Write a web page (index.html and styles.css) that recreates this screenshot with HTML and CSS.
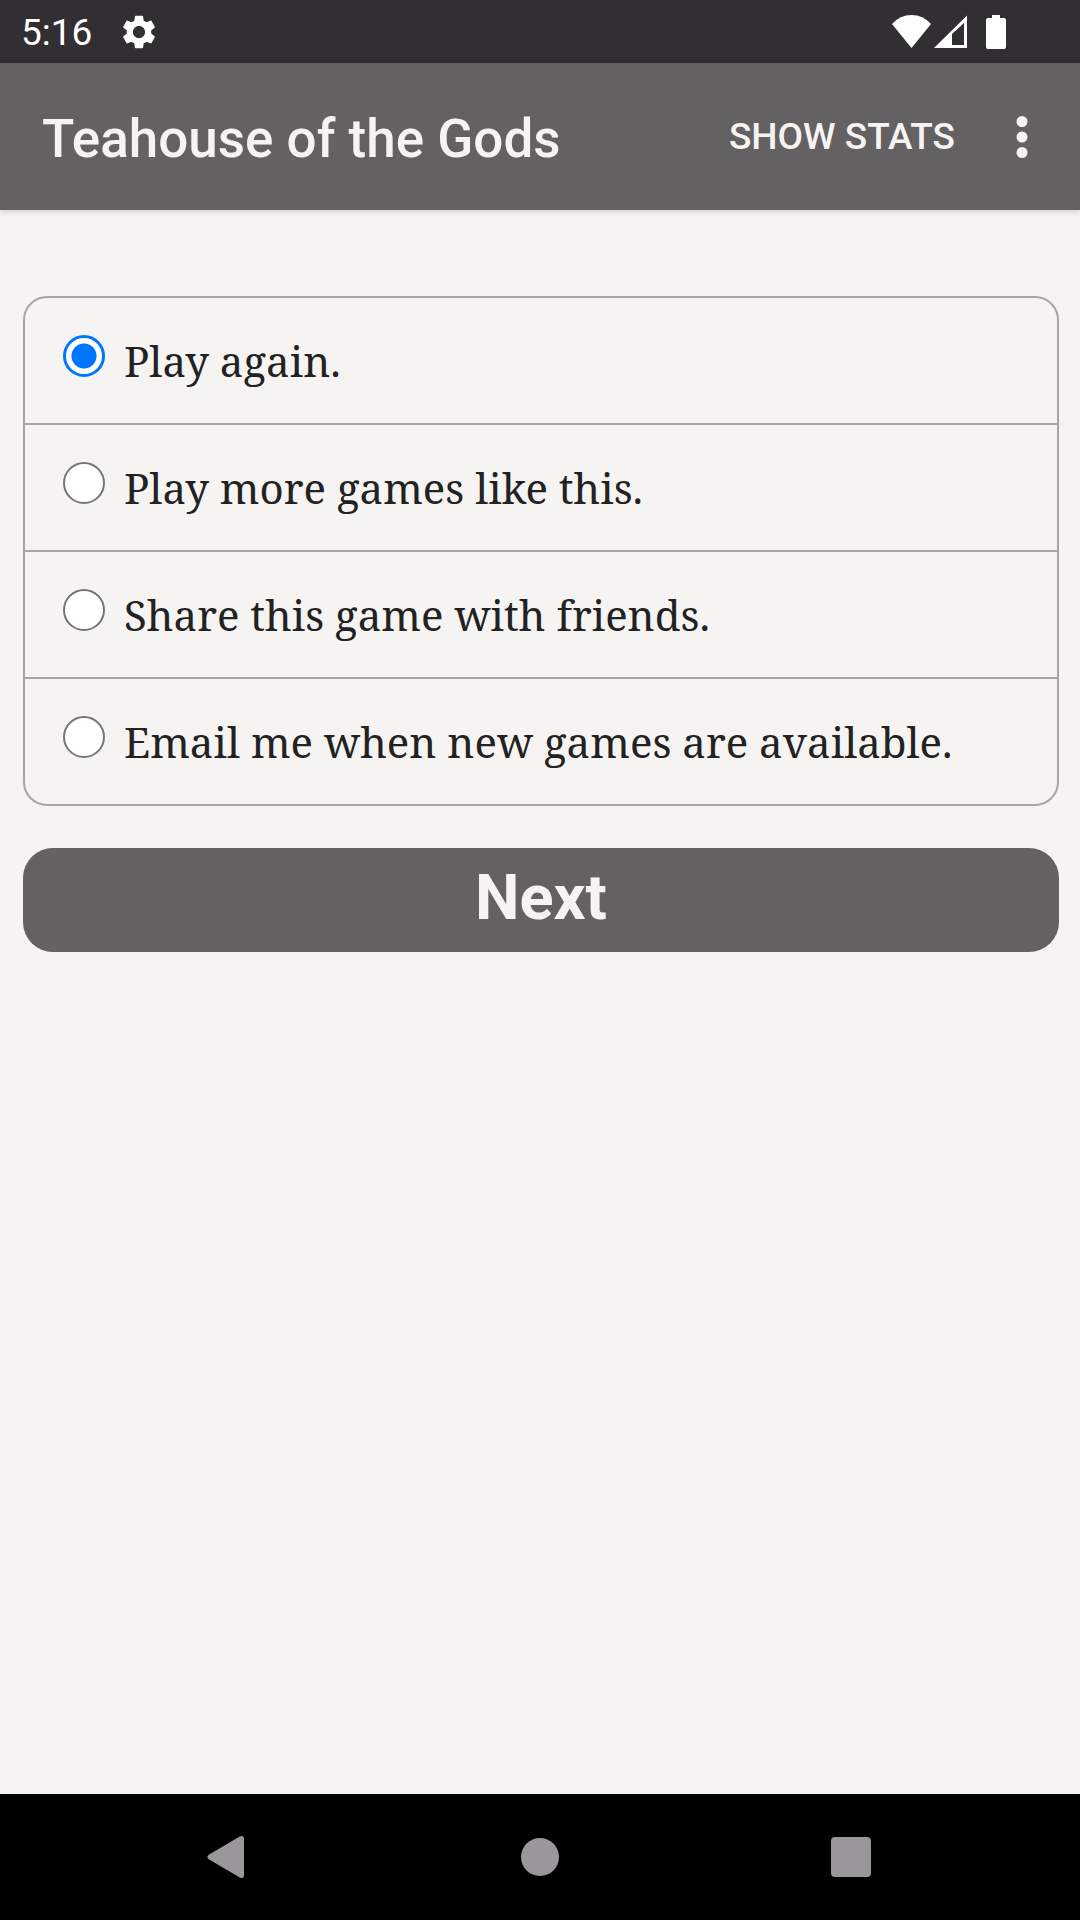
FILE: index.html
```html
<!DOCTYPE html>
<html lang="en">
<head>
<meta charset="utf-8">
<meta name="viewport" content="width=device-width, initial-scale=1">
<title>Teahouse of the Gods</title>
<link rel="stylesheet" href="styles.css">
</head>
<body>
<div class="status-bar">
  <span class="clock">5:16</span>
  <svg class="gear" viewBox="2 2 20 20" aria-hidden="true"><path fill="#fff" d="M19.14 12.94c.04-.3.06-.61.06-.94 0-.32-.02-.64-.07-.94l2.03-1.58c.18-.14.23-.41.12-.61l-1.92-3.32c-.12-.22-.37-.29-.59-.22l-2.39.96c-.5-.38-1.03-.7-1.62-.94l-.36-2.54c-.04-.24-.24-.41-.48-.41h-3.84c-.24 0-.43.17-.47.41l-.36 2.54c-.59.24-1.13.57-1.62.94l-2.39-.96c-.22-.08-.47 0-.59.22L2.74 8.87c-.12.21-.08.47.12.61l2.03 1.58c-.05.3-.09.63-.09.94s.02.64.07.94l-2.03 1.58c-.18.14-.23.41-.12.61l1.92 3.32c.12.22.37.29.59.22l2.39-.96c.5.38 1.03.7 1.62.94l.36 2.54c.05.24.24.41.48.41h3.84c.24 0 .44-.17.47-.41l.36-2.54c.59-.24 1.13-.56 1.62-.94l2.39.96c.22.08.47 0 .59-.22l1.92-3.32c.12-.22.07-.47-.12-.61l-2.01-1.58zM12 15.6c-1.98 0-3.6-1.62-3.6-3.6s1.62-3.6 3.6-3.6 3.6 1.62 3.6 3.6-1.62 3.6-3.6 3.6z"/></svg>
  <svg class="signals" viewBox="0 0 114 34" aria-hidden="true">
    <path fill="#fff" d="M0 9Q8 0 19.500 0T39 9L19.500 33Z"/>
    <path fill="#fff" fill-rule="evenodd" d="M42 33L75 .5V33ZM60 19V30H72V8Z"/>
    <path fill="#fff" d="M100 0h8v3h4q2 0 2 2v27q0 2-2 2H96q-2 0-2-2V5q0-2 2-2h4Z"/>
  </svg>
</div>
<header class="app-bar">
  <h1 class="title">Teahouse of the Gods</h1>
  <button class="stats" type="button">SHOW STATS</button>
  <button class="more" type="button" aria-label="More options">
    <svg class="dots" viewBox="0 0 12 42" aria-hidden="true"><g fill="#f5f4f2"><circle cx="6" cy="5.500" r="5.500"/><circle cx="6" cy="21" r="5.500"/><circle cx="6" cy="36.500" r="5.500"/></g></svg>
  </button>
</header>
<main class="content">
  <form class="form">
    <div class="choices" role="radiogroup" aria-label="What next?">
      <label class="choice"><input class="radio" type="radio" name="next" checked><span>Play again.</span></label>
      <label class="choice"><input class="radio" type="radio" name="next"><span>Play more games like this.</span></label>
      <label class="choice"><input class="radio" type="radio" name="next"><span>Share this game with friends.</span></label>
      <label class="choice"><input class="radio" type="radio" name="next"><span>Email me when new games are available.</span></label>
    </div>
    <button class="next" type="button">Next</button>
  </form>
</main>
<nav class="nav-bar" aria-label="System">
  <button class="nav-button" type="button" aria-label="Back"><svg class="nav-icon" viewBox="0 0 44 44" aria-hidden="true"><path d="M3 22L34.500 3.500V40.500Z" fill="#9a979a" stroke="#9a979a" stroke-width="5" stroke-linejoin="round"/></svg></button>
  <button class="nav-button" type="button" aria-label="Home"><svg class="nav-icon" viewBox="0 0 44 44" aria-hidden="true"><circle cx="22" cy="22" r="19" fill="#9a979a"/></svg></button>
  <button class="nav-button" type="button" aria-label="Recent apps"><svg class="nav-icon" viewBox="0 0 44 44" aria-hidden="true"><rect x="2" y="2" width="40" height="40" rx="4" fill="#9a979a"/></svg></button>
</nav>
</body>
</html>
```
FILE: styles.css
```css
* {
  box-sizing: border-box;
}

body {
  display: flex;
  flex-direction: column;
  min-height: 100vh;
  margin: 0;
  background: #f5f4f2;
  color: #222;
  font-family: Roboto, sans-serif;
}

button {
  padding: 0;
  border: 0;
  background: none;
  color: #f5f4f2;
  font-family: inherit;
}

svg {
  display: block;
}

.status-bar {
  display: flex;
  align-items: center;
  height: 63px;
  padding: 0 74px 0 21px;
  background: #322f32;
}

.clock {
  padding-top: 3px;
  color: #fff;
  font-size: 37px;
  line-height: 48px;
}

.gear {
  width: 34px;
  height: 34px;
  margin-left: 30px;
}

.signals {
  width: 114px;
  height: 34px;
  margin-left: auto;
}

.app-bar {
  display: flex;
  align-items: center;
  height: 147px;
  padding: 0 42px;
  background: #636162;
  box-shadow: 0 1px 6px rgba(0, 0, 0, 0.2);
}

.title {
  flex: 1;
  padding-top: 4px;
  margin: 0;
  color: #f5f4f2;
  font-size: 53px;
  font-weight: 500;
  line-height: 64px;
}

.stats {
  padding-top: 1px;
  font-size: 37px;
  font-weight: 500;
  line-height: 48px;
}

.more {
  padding: 8px 10px;
  margin-left: 51px;
}

.dots {
  width: 12px;
  height: 42px;
}

.content {
  flex: 1;
  padding: 86px 21px 42px 23px;
}

.form {
  display: flex;
  flex-direction: column;
  gap: 42px;
}

.choices {
  border: 2px solid #a8a5a5;
  border-radius: 24px;
}

.choice {
  display: flex;
  align-items: flex-start;
  gap: 19px;
  padding: 37px 38px;
  font-family: "Noto Serif", "Droid Serif", "DejaVu Serif", serif;
  font-size: 42px;
  line-height: 51px;
}

.choice + .choice {
  border-top: 2px solid #a8a5a5;
}

.radio {
  flex: none;
  width: 42px;
  height: 42px;
  margin: 0;
  appearance: none;
  border: 2px solid #757575;
  border-radius: 50%;
  background: #fff;
}

.radio:checked {
  border-width: 3px;
  border-color: #0075ff;
  background: radial-gradient(circle, #0075ff 12px, #fff 13px);
}

.next {
  height: 104px;
  padding-bottom: 4px;
  border-radius: 30px;
  background: #63625f;
  font-size: 63px;
  font-weight: 700;
  line-height: 80px;
}

.nav-bar {
  display: grid;
  grid-template-columns: repeat(3, 1fr);
  height: 126px;
  padding: 0 74px;
  background: #000;
}

.nav-button {
  display: grid;
  place-items: center;
}

.nav-icon {
  width: 44px;
  height: 44px;
}
```
